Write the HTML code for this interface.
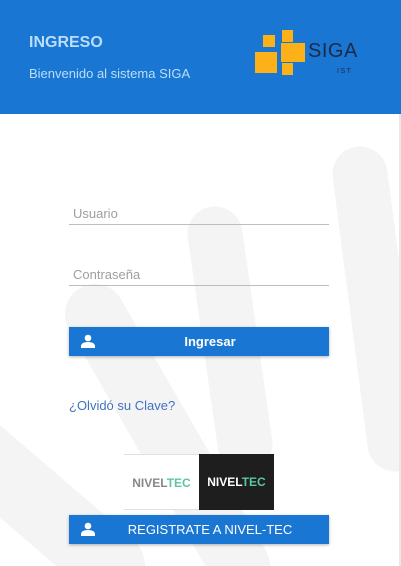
<!DOCTYPE html>
<html><head><meta charset="utf-8"><style>
*{margin:0;padding:0;box-sizing:border-box}
body{width:401px;height:566px;overflow:hidden;background:#fff;font-family:"Liberation Sans",sans-serif;position:relative}
.hdr{position:absolute;left:0;top:0;width:401px;height:114px;background:#1976d2}
.t1{position:absolute;left:29px;top:34px;font-size:16px;font-weight:bold;color:#bbdefb}
.t2{position:absolute;left:29px;top:66px;font-size:13px;color:#bbdefb}
.bg{position:absolute;left:0;top:114px}
.in{position:absolute;left:69px;width:260px;border-bottom:1px solid #bdbdbd;color:#9e9e9e;font-size:13px;padding-left:4px;height:19px}
.btn{position:absolute;left:69px;width:260px;height:29px;background:#1976d2;color:#fff;font-size:13px;text-align:center;line-height:29px;box-shadow:0 1px 3px rgba(0,0,0,.3);padding-left:22px}
.btn svg{position:absolute;left:12px;top:7px}
.lnk{position:absolute;left:69px;top:398px;color:#3f73c0;font-size:13px}
.nv{position:absolute;top:454px;height:56px;width:75px;font-size:12px;font-weight:bold;text-align:center;line-height:56px}
.edge{position:absolute;right:0;top:114px;width:2px;height:452px;background:#e8e8e8}
</style></head><body>
<div class="hdr">
<div class="t1">INGRESO</div>
<div class="t2">Bienvenido al sistema SIGA</div>
<svg style="position:absolute;left:0;top:0" width="401" height="114">
<g fill="#fbb117">
<rect x="263" y="35" width="12" height="12"/>
<rect x="255" y="52" width="22" height="21"/>
<rect x="282" y="30" width="11" height="12"/>
<rect x="281" y="43" width="24" height="19"/>
<rect x="282" y="63" width="11" height="12"/>
</g>
<text x="308" y="57" font-family="Liberation Sans" font-size="20" fill="#1c2a4a" letter-spacing="0.5">SIGA</text>
<text x="337" y="73" font-family="Liberation Sans" font-size="7" fill="#1c2a4a" letter-spacing="1.5">IST</text>
</svg>
</div>
<svg class="bg" width="401" height="452">
<g stroke="#f4f4f4" stroke-linecap="round" fill="none">
<path d="M-20 340 L110 452" stroke-width="70"/>
<path d="M95 200 L240 452" stroke-width="60"/>
<path d="M215 120 L245 330" stroke-width="55"/>
<path d="M360 60 L395 330" stroke-width="55"/>
</g>
</svg>
<div class="edge"></div>
<div class="in" style="top:206px">Usuario</div>
<div class="in" style="top:267px">Contraseña</div>
<div class="btn" style="top:327px"><svg width="14" height="14" viewBox="0 0 14 14"><circle cx="7" cy="4" r="3.3" fill="#fff"/><path d="M0 14 V12 C0 9 4 8 7 8 C10 8 14 9 14 12 V14Z" fill="#fff"/></svg><b>Ingresar</b></div>
<div class="lnk">¿Olvidó su Clave?</div>
<div class="nv" style="left:124px;background:#fff;border-top:1px solid #e0e0e0;border-bottom:1px solid #e0e0e0;color:#888">NIVEL<span style="color:#5cc6a0">TEC</span></div>
<div class="nv" style="left:199px;background:#1e1e1e;color:#fff">NIVEL<span style="color:#5cc6a0">TEC</span></div>
<div class="btn" style="top:515px"><svg width="14" height="14" viewBox="0 0 14 14"><circle cx="7" cy="4" r="3.3" fill="#fff"/><path d="M0 14 V12 C0 9 4 8 7 8 C10 8 14 9 14 12 V14Z" fill="#fff"/></svg>REGISTRATE A NIVEL-TEC</div>
</body></html>
